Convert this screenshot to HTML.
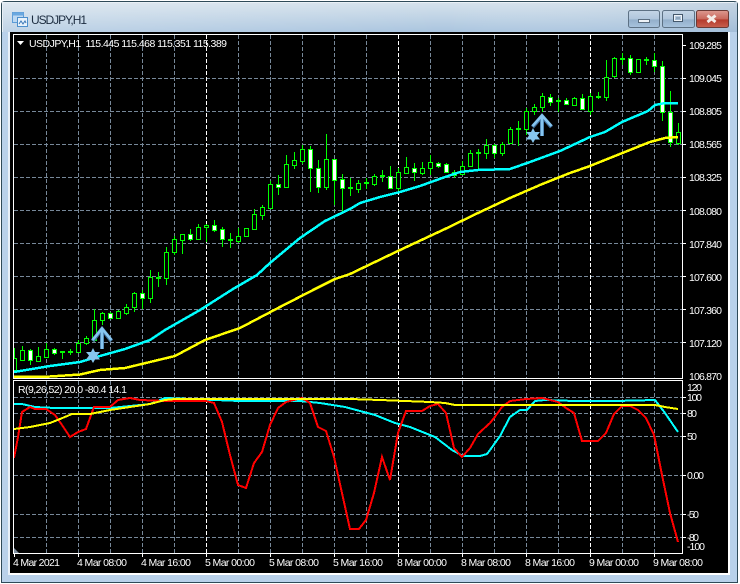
<!DOCTYPE html>
<html><head><meta charset="utf-8"><title>USDJPY,H1</title>
<style>
html,body{margin:0;padding:0;background:#fff;width:740px;height:584px;overflow:hidden}
svg{display:block}
text{font-family:"Liberation Sans",sans-serif;font-size:10.5px;fill:#fff}
</style></head><body>
<svg xmlns="http://www.w3.org/2000/svg" width="740" height="584" viewBox="0 0 740 584">
<defs>
<linearGradient id="tb" x1="0" y1="0" x2="0" y2="1"><stop offset="0" stop-color="#d6e2ec"/><stop offset="1" stop-color="#aac5df"/></linearGradient>
<linearGradient id="tbh" x1="0" y1="0" x2="1" y2="0"><stop offset="0" stop-color="#fff" stop-opacity=".25"/><stop offset=".6" stop-color="#fff" stop-opacity="0"/><stop offset="1" stop-color="#8fa9c4" stop-opacity=".25"/></linearGradient>
<linearGradient id="bn" x1="0" y1="0" x2="0" y2="1"><stop offset="0" stop-color="#c4d5e6"/><stop offset=".5" stop-color="#b0c6dc"/><stop offset=".55" stop-color="#93afcb"/><stop offset="1" stop-color="#a9c4de"/></linearGradient>
<linearGradient id="bc" x1="0" y1="0" x2="0" y2="1"><stop offset="0" stop-color="#dd9a90"/><stop offset=".5" stop-color="#c9685c"/><stop offset=".55" stop-color="#b43a2c"/><stop offset="1" stop-color="#c8604f"/></linearGradient>
<clipPath id="cm"><rect x="14" y="35" width="668" height="343"/></clipPath>
<clipPath id="cs"><rect x="14" y="381" width="668" height="172"/></clipPath>
</defs>

<!-- window frame -->
<path d="M1.5 583V5Q1.5 1.5 5 1.5H734Q737.5 1.5 737.5 5V582.5H1.5Z" fill="#b9d1ea" stroke="#2f4a58"/>
<rect x="2" y="2" width="735" height="30" fill="url(#tb)"/>
<rect x="2" y="2" width="735" height="30" fill="url(#tbh)"/>
<path d="M2.5 32V4.5Q2.5 2.5 5 2.5H734" fill="none" stroke="#e9f0f6"/>
<rect x="8" y="32" width="2" height="543" fill="#e8f0f8"/>
<rect x="10" y="32" width="720" height="543" fill="#fff"/>
<rect x="10" y="32" width="1" height="541" fill="#5f6a75"/>
<rect x="10" y="32" width="718" height="541" fill="#000"/>

<!-- icon -->
<rect x="12.5" y="12.5" width="11" height="10" fill="#bcd8f2" stroke="#5c9bd6"/>
<rect x="12.5" y="12.5" width="11" height="3" fill="#6aa8e0"/>
<rect x="17.5" y="17.5" width="10" height="9" fill="#e8f2fb" stroke="#4d8fcc"/>
<path d="M19 24l2-3 2 3 2-3 1 2" fill="none" stroke="#3c78b8"/>
<text x="31" y="24" textLength="56" lengthAdjust="spacing" style="font-size:12px;fill:#1c2c40">USDJPY,H1</text>

<!-- buttons -->
<rect x="628.5" y="10.5" width="31" height="17" rx="2" fill="url(#bn)" stroke="#5d7184"/>
<rect x="662.5" y="10.5" width="32" height="17" rx="2" fill="url(#bn)" stroke="#5d7184"/>
<rect x="696.5" y="10.5" width="32" height="17" rx="2" fill="url(#bc)" stroke="#6b3a36"/>
<rect x="638.5" y="19.5" width="11" height="3" fill="#eef3f8" stroke="#5a6d80"/>
<rect x="673.5" y="14.5" width="9" height="7" fill="none" stroke="#44586c" />
<rect x="674.5" y="15.5" width="7" height="5" fill="none" stroke="#eef3f8"/>
<rect x="676" y="17" width="4" height="2" fill="#8ea6bd"/>
<path d="M707.5 15.5L715.5 22M715.5 15.5L707.5 22" stroke="#f4ece8" stroke-width="3" fill="none"/>

<!-- grid -->
<g fill="none" shape-rendering="crispEdges" stroke-dasharray="4 2" stroke="#778899">
<path d="M14 78.5H682M14 111.5H682M14 144.5H682M14 177.5H682M14 210.5H682M14 243.5H682M14 276.5H682M14 309.5H682M14 342.5H682"/>
<path d="M14 397.5H682M14 413.5H682M14 436.5H682M14 475.5H682M14 514.5H682M14 537.5H682"/>
<path d="M46.5 35V378M78.5 35V378M110.5 35V378M142.5 35V378M174.5 35V378M238.5 35V378M270.5 35V378M302.5 35V378M334.5 35V378M366.5 35V378M430.5 35V378M462.5 35V378M494.5 35V378M526.5 35V378M558.5 35V378M622.5 35V378M654.5 35V378"/>
<path d="M46.5 381V553M78.5 381V553M110.5 381V553M142.5 381V553M174.5 381V553M238.5 381V553M270.5 381V553M302.5 381V553M334.5 381V553M366.5 381V553M430.5 381V553M462.5 381V553M494.5 381V553M526.5 381V553M558.5 381V553M622.5 381V553M654.5 381V553"/>
<path stroke="#fff" d="M206.5 35V378M398.5 35V378M590.5 35V378M206.5 381V553M398.5 381V553M590.5 381V553"/>
</g>

<g clip-path="url(#cm)" shape-rendering="crispEdges" fill="none" stroke="#00ff00">
<!-- wicks -->
<path d="M14.5 348V372M22.5 346V361M30.5 349V365M38.5 347V362M46.5 343V358M54.5 348V355M62.5 351V359M70.5 349V355M78.5 340V352M86.5 336V345M94.5 309V342M102.5 312V325M110.5 312V319M118.5 310V319M126.5 304V315M134.5 292V312M142.5 290V309M150.5 270V303M158.5 272V287M166.5 247V285M174.5 236V255M182.5 234V254M190.5 229V241M198.5 224V239M206.5 224V242M214.5 220V232M222.5 227V247M230.5 233V248M238.5 228V243M246.5 228V237M254.5 209V230M262.5 205V220M270.5 181V208M278.5 175V195M286.5 155V188M294.5 152V169M302.5 145V164M310.5 146V192M318.5 160V193M326.5 134V190M334.5 159V205M342.5 174V212M350.5 178V196M358.5 180V193M366.5 178V189M374.5 174V186M382.5 170V182M390.5 166V188M398.5 168V192M406.5 157V173M414.5 163V181M422.5 162V175M430.5 155V175M438.5 162V168M446.5 163V173M454.5 170V178M462.5 161V175M470.5 150V166M478.5 149V169M486.5 139V159M494.5 144V158M502.5 142V156M510.5 127V144M518.5 121V146M526.5 108V135M534.5 104V115M542.5 93V112M550.5 94V106M558.5 98V112M566.5 98V105M574.5 97V106M582.5 94V110M590.5 93V115M598.5 92V99M606.5 60V101M614.5 57V78M622.5 53V65M630.5 55V75M638.5 59V73M646.5 57V65M654.5 53V72M662.5 61V121M670.5 91V147M678.5 123V145"/>
<!-- dojis -->
<path stroke-width="2" d="M60 352H65M68 352H73M156 278H161M228 240H233M348 188H353M364 183H369M380 176H385M476 153H481M516 129H521M556 101H561M596 97H601M620 59H625M644 60H649"/>
<!-- hollow -->
<path fill="#000" d="M12.5 358.5h4V370.5h-4zM20.5 350.5h4V360.5h-4zM36.5 356.5h4V361.5h-4zM44.5 349.5h4V357.5h-4zM76.5 343.5h4V352.5h-4zM84.5 338.5h4V343.5h-4zM92.5 320.5h4V340.5h-4zM100.5 313.5h4V320.5h-4zM116.5 311.5h4V318.5h-4zM124.5 307.5h4V313.5h-4zM132.5 293.5h4V307.5h-4zM148.5 277.5h4V298.5h-4zM164.5 252.5h4V278.5h-4zM172.5 239.5h4V252.5h-4zM180.5 234.5h4V240.5h-4zM196.5 227.5h4V239.5h-4zM204.5 225.5h4V227.5h-4zM236.5 236.5h4V241.5h-4zM244.5 228.5h4V236.5h-4zM252.5 214.5h4V229.5h-4zM260.5 207.5h4V215.5h-4zM268.5 184.5h4V208.5h-4zM284.5 164.5h4V187.5h-4zM292.5 160.5h4V165.5h-4zM300.5 149.5h4V161.5h-4zM324.5 159.5h4V187.5h-4zM356.5 183.5h4V189.5h-4zM372.5 176.5h4V184.5h-4zM396.5 172.5h4V188.5h-4zM404.5 167.5h4V173.5h-4zM420.5 168.5h4V173.5h-4zM428.5 162.5h4V168.5h-4zM460.5 166.5h4V174.5h-4zM468.5 153.5h4V166.5h-4zM484.5 145.5h4V153.5h-4zM500.5 144.5h4V153.5h-4zM508.5 129.5h4V143.5h-4zM524.5 111.5h4V129.5h-4zM532.5 107.5h4V111.5h-4zM540.5 96.5h4V107.5h-4zM572.5 98.5h4V105.5h-4zM588.5 96.5h4V111.5h-4zM604.5 77.5h4V97.5h-4zM612.5 58.5h4V76.5h-4zM636.5 59.5h4V72.5h-4zM676.5 132.5h4V143.5h-4z"/>
<!-- filled -->
<path fill="#fff" d="M28.5 350.5h4V360.5h-4zM52.5 349.5h4V353.5h-4zM108.5 313.5h4V318.5h-4zM140.5 293.5h4V298.5h-4zM188.5 234.5h4V239.5h-4zM212.5 225.5h4V230.5h-4zM220.5 229.5h4V239.5h-4zM276.5 184.5h4V187.5h-4zM308.5 149.5h4V168.5h-4zM316.5 168.5h4V187.5h-4zM332.5 159.5h4V180.5h-4zM340.5 179.5h4V188.5h-4zM388.5 176.5h4V188.5h-4zM412.5 168.5h4V172.5h-4zM436.5 163.5h4V166.5h-4zM444.5 164.5h4V172.5h-4zM452.5 172.5h4V175.5h-4zM492.5 145.5h4V153.5h-4zM548.5 97.5h4V102.5h-4zM564.5 100.5h4V104.5h-4zM580.5 98.5h4V109.5h-4zM628.5 58.5h4V72.5h-4zM652.5 60.5h4V66.5h-4zM660.5 66.5h4V112.5h-4zM668.5 112.5h4V142.5h-4z"/>
</g>

<!-- main MAs -->
<g clip-path="url(#cm)" fill="none" stroke-width="2.5" shape-rendering="crispEdges">
<polyline stroke="#ffff00" points="14,377 50,376.5 80,374.5 100,370 125,368 150,362 175,356 205,340 240,328 280,307 315,289 335,279 350,274 375,262 400,250 445,229 478,213 510,198 540,185 560,177 570,173 590,166 620,154 650,142 665,138 678,137"/>
<polyline stroke="#00ffff" points="14,372 50,366 80,362 100,356 125,349 150,340 165,330 200,310 233,289 257,275 270,263 300,238 325,221 350,209 360,203 380,197 400,192 420,186 445,177 460,172 478,170 510,169 530,162 560,151 590,137 605,132 622,122 648,111 655,105 665,103 678,103"/>
</g>

<!-- arrows & stars -->
<g fill="none" stroke-linejoin="miter">
<path d="M92.5 341L102 329L111.5 341M102 330V349" stroke="#3f6f9c" stroke-width="4"/>
<path d="M92.5 340L102 328.5L111.5 340M102 330V349" stroke="#87c6f0" stroke-width="2.6"/>
<path d="M532.5 127L542 116L551.5 127M542 117V136" stroke="#3f6f9c" stroke-width="4"/>
<path d="M532.5 126L542 115.5L551.5 126M542 117V136" stroke="#87c6f0" stroke-width="2.6"/>
</g>
<polygon fill="#87c6ee" points="93,348 95,352 100,352 97,355.5 100,359.5 95,359.5 93,363 91,359.5 86,359.5 89,355.5 86,352 91,352"/>
<polygon fill="#87c6ee" points="533,128 535,132 540,132 537,135.5 540,139.5 535,139.5 533,143 531,139.5 526,139.5 529,135.5 526,132 531,132"/>

<!-- sub indicator -->
<g clip-path="url(#cs)" fill="none" stroke-width="2" shape-rendering="crispEdges">
<polyline stroke="#00ffff" points="14,404 22,404 35,407 55,408 110,408 130,406 150,404 165,398 240,401 255,401 300,401 320,403 345,407 360,411 375,415 395,423 410,427 435,437 452,450 463,456 480,456 487,454 490,450 500,436 510,417 520,410 527,410 535,401 545,400 575,401 615,401 655,400 665,413 678,432"/>
<polyline stroke="#ff0000" points="14,458 18,437 22,412 30,407 35,409 46,409 55,415 62,425 70,437 78,432 86,429 94,407 110,407 118,400 130,398 140,400 165,401 180,401 206,401 214,403 222,422 230,455 238,485 246,488 254,463 262,452 270,425 278,408 286,402 302,398 310,403 318,427 326,431 334,457 350,529 359,529 366,520 374,493 382,457 390,480 398,433 406,411 422,411 430,406 438,404 446,413 454,448 462,457 470,448 478,434 490,423 494,418 502,407 510,401 526,399 542,398 558,402 566,408 574,413 582,441 598,441 606,433 614,414 622,406 630,406 638,410 646,418 654,435 662,475 670,513 678,542"/>
<polyline stroke="#ffff00" points="14,429 30,427 50,423 60,419 72,414 90,414 110,410 130,407 150,404 165,400 175,399 350,399 380,400 430,402 445,403 455,405 490,405 655,405 665,407 678,409"/>
</g>

<!-- chart borders -->
<g fill="#fff" shape-rendering="crispEdges">
<rect x="13" y="34" width="670" height="1"/>
<rect x="13" y="34" width="1" height="345"/>
<rect x="682" y="34" width="1" height="345"/>
<rect x="13" y="378" width="670" height="1"/>
<rect x="13" y="380" width="670" height="1"/>
<rect x="13" y="380" width="1" height="174"/>
<rect x="682" y="380" width="1" height="174"/>
<rect x="13" y="553" width="670" height="1"/>
</g>
<path fill="none" stroke="#fff" shape-rendering="crispEdges" d="M683 45.5h3M683 78.5h3M683 111.5h3M683 144.5h3M683 177.5h3M683 210.5h3M683 243.5h3M683 276.5h3M683 309.5h3M683 342.5h3M683 397.5h3M683 413.5h3M683 436.5h3M683 475.5h3M683 514.5h3M683 537.5h3M14.5 554v3M78.5 554v3M142.5 554v3M206.5 554v3M270.5 554v3M334.5 554v3M398.5 554v3M462.5 554v3M526.5 554v3M590.5 554v3M654.5 554v3"/>
<polygon points="14,548 14,553 19,553" fill="#8090a0"/>
<polygon points="17,41 24,41 20.5,45" fill="#fff"/>

<!-- legends -->
<text x="29" y="47" textLength="198" lengthAdjust="spacing" xml:space="preserve">USDJPY,H1  115.445 115.468 115.351 115.389</text>
<text x="18" y="393" textLength="109" lengthAdjust="spacing">R(9,26,52) 20.0 -80.4 14.1</text>

<!-- price axis -->
<g>
<text x="689" y="49" textLength="33" lengthAdjust="spacing">109.285</text>
<text x="689" y="82" textLength="33" lengthAdjust="spacing">109.045</text>
<text x="689" y="115" textLength="33" lengthAdjust="spacing">108.805</text>
<text x="689" y="148" textLength="33" lengthAdjust="spacing">108.565</text>
<text x="689" y="181" textLength="33" lengthAdjust="spacing">108.325</text>
<text x="689" y="215" textLength="33" lengthAdjust="spacing">108.080</text>
<text x="689" y="248" textLength="33" lengthAdjust="spacing">107.840</text>
<text x="689" y="281" textLength="33" lengthAdjust="spacing">107.600</text>
<text x="689" y="314" textLength="33" lengthAdjust="spacing">107.360</text>
<text x="689" y="347" textLength="33" lengthAdjust="spacing">107.120</text>
<text x="689" y="380" textLength="33" lengthAdjust="spacing">106.870</text>
<text x="687" y="391" textLength="15" lengthAdjust="spacing">120</text>
<text x="687" y="401" textLength="15" lengthAdjust="spacing">100</text>
<text x="687" y="417" textLength="10" lengthAdjust="spacing">80</text>
<text x="687" y="440" textLength="10" lengthAdjust="spacing">50</text>
<text x="687" y="479" textLength="17" lengthAdjust="spacing">0.00</text>
<text x="687" y="518" textLength="12" lengthAdjust="spacing">-50</text>
<text x="687" y="541" textLength="12" lengthAdjust="spacing">-80</text>
<text x="687" y="550" textLength="18" lengthAdjust="spacing">-100</text>
</g>

<!-- time axis -->
<g>
<text x="13" y="566" textLength="47" lengthAdjust="spacing">4 Mar 2021</text>
<text x="77" y="566" textLength="50" lengthAdjust="spacing">4 Mar 08:00</text>
<text x="141" y="566" textLength="50" lengthAdjust="spacing">4 Mar 16:00</text>
<text x="205" y="566" textLength="50" lengthAdjust="spacing">5 Mar 00:00</text>
<text x="269" y="566" textLength="50" lengthAdjust="spacing">5 Mar 08:00</text>
<text x="333" y="566" textLength="50" lengthAdjust="spacing">5 Mar 16:00</text>
<text x="397" y="566" textLength="50" lengthAdjust="spacing">8 Mar 00:00</text>
<text x="461" y="566" textLength="50" lengthAdjust="spacing">8 Mar 08:00</text>
<text x="525" y="566" textLength="50" lengthAdjust="spacing">8 Mar 16:00</text>
<text x="589" y="566" textLength="50" lengthAdjust="spacing">9 Mar 00:00</text>
<text x="653" y="566" textLength="50" lengthAdjust="spacing">9 Mar 08:00</text>
</g>
</svg>
</body></html>
